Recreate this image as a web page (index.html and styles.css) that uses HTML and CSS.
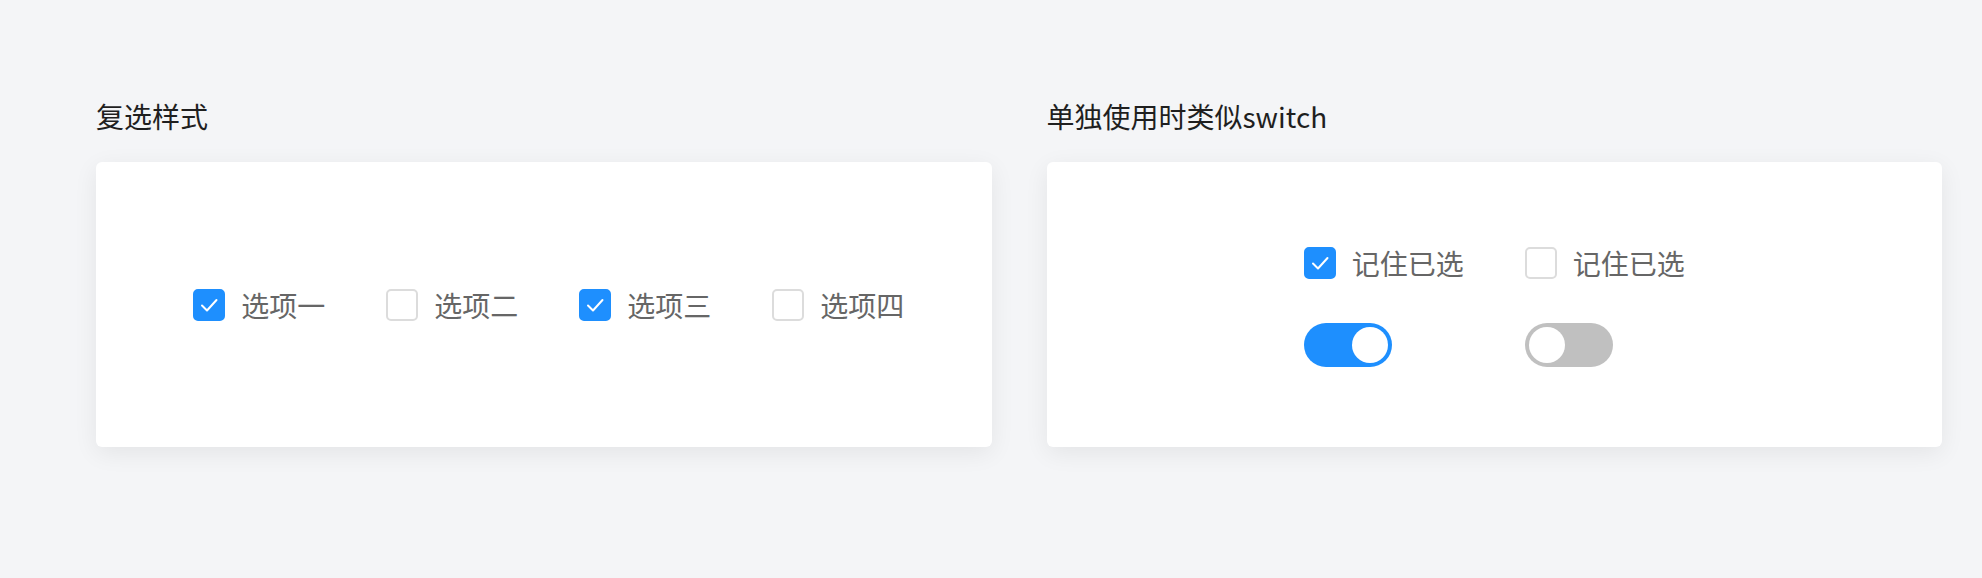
FILE: index.html
```html
<!DOCTYPE html>
<html lang="zh-CN">
<head>
  <meta charset="UTF-8" />
  <title>复选框</title>
  <meta name="viewport" content="width=device-width, initial-scale=1.0"/>
  <link rel="stylesheet" href="styles.css">
</head>
<body>

  <main class="demo-grid">
    <!-- 复选样式 -->
    <section class="demo">
      <h2 class="demo-title">复选样式</h2>
      <div class="demo-card">
        <div class="check-group">
          <label class="check-item">
            <span class="check-box is-checked">
              <svg viewBox="0 0 32 32"><path d="M9 16.5 L14 21.5 L23.5 11" /></svg>
            </span>
            <span class="check-label">选项一</span>
          </label>
          <label class="check-item">
            <span class="check-box"></span>
            <span class="check-label">选项二</span>
          </label>
          <label class="check-item">
            <span class="check-box is-checked">
              <svg viewBox="0 0 32 32"><path d="M9 16.5 L14 21.5 L23.5 11" /></svg>
            </span>
            <span class="check-label">选项三</span>
          </label>
          <label class="check-item">
            <span class="check-box"></span>
            <span class="check-label">选项四</span>
          </label>
        </div>
      </div>
    </section>

    <!-- 单独使用时类似switch -->
    <section class="demo">
      <h2 class="demo-title">单独使用时类似switch</h2>
      <div class="demo-card">
        <div class="single-grid">
          <label class="check-item">
            <span class="check-box is-checked">
              <svg viewBox="0 0 32 32"><path d="M9 16.5 L14 21.5 L23.5 11" /></svg>
            </span>
            <span class="check-label">记住已选</span>
          </label>
          <label class="check-item">
            <span class="check-box"></span>
            <span class="check-label">记住已选</span>
          </label>
          <span class="switch is-on"><span class="switch-knob"></span></span>
          <span class="switch"><span class="switch-knob"></span></span>
        </div>
      </div>
    </section>
  </main>

</body>
</html>
```

FILE: styles.css
```css
/* reset */
* {
  margin: 0;
  padding: 0;
  box-sizing: border-box;
}

body {
  background-color: #f4f5f7;
  font-family: "Noto Sans CJK SC", "Noto Sans", sans-serif;
  color: #222;
  min-height: 100vh;
}

.demo-grid {
  display: grid;
  grid-template-columns: 1fr 1fr;
  column-gap: 55px;
  padding: 96px 40px 0 96px;
}

.demo-title {
  font-size: 28px;
  font-weight: 400;
  line-height: 40px;
  color: #1f1f1f;
  margin-bottom: 26px;
}

.demo-card {
  height: 285px;
  background-color: #fff;
  border-radius: 6px;
  box-shadow: 0 6px 24px rgba(0, 0, 0, 0.07);
  display: flex;
  align-items: center;
  justify-content: center;
}

/* checkbox */
.check-group {
  display: flex;
  gap: 61px;
  padding-left: 10px;
}

.check-item {
  display: flex;
  align-items: center;
  height: 40px;
  cursor: pointer;
}

.check-box {
  width: 32px;
  height: 32px;
  border: 2px solid #dcdcdc;
  border-radius: 5px;
  background-color: #fff;
  margin-right: 16px;
  display: flex;
}

.check-box.is-checked {
  background-color: #1e8ffe;
  border-color: #1e8ffe;
}

.check-box svg {
  margin: -2px;
  width: 32px;
  height: 32px;
}

.check-box svg path {
  fill: none;
  stroke: #fff;
  stroke-width: 2;
  stroke-linecap: round;
  stroke-linejoin: round;
}

.check-label {
  font-size: 28px;
  line-height: 40px;
  color: #666;
}

/* switch */
.single-grid {
  display: grid;
  grid-template-columns: auto auto;
  column-gap: 61px;
  row-gap: 40px;
  justify-items: start;
  align-items: center;
}

.switch {
  width: 88px;
  height: 44px;
  border-radius: 22px;
  padding: 4px;
  background-color: #c0c0c0;
  display: flex;
  justify-content: flex-start;
}

.switch.is-on {
  background-color: #1e8ffe;
  justify-content: flex-end;
}

.switch-knob {
  width: 36px;
  height: 36px;
  border-radius: 50%;
  background-color: #fff;
}
```
